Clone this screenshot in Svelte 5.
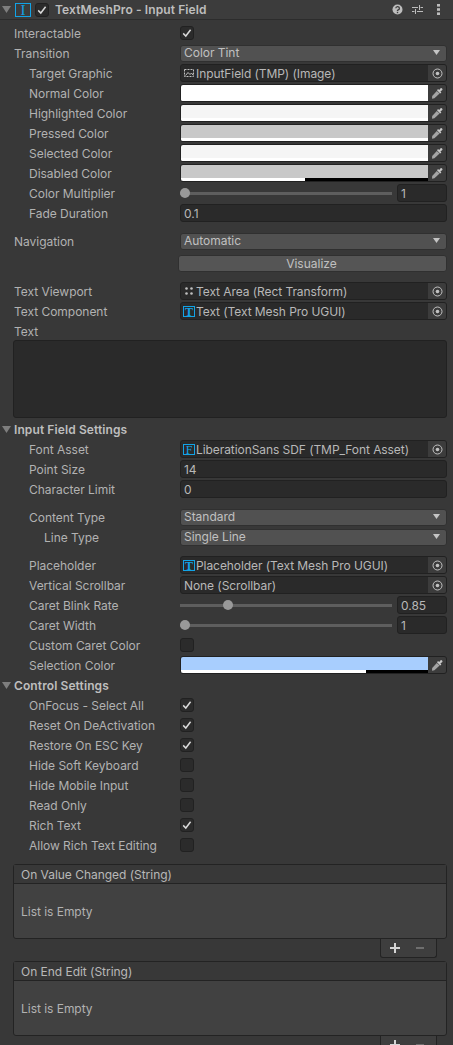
<script lang="ts">
	const eventLists = ['On Value Changed (String)', 'On End Edit (String)'];
	const controlRows = [
		{ label: 'OnFocus - Select All', on: true },
		{ label: 'Reset On DeActivation', on: true },
		{ label: 'Restore On ESC Key', on: true },
		{ label: 'Hide Soft Keyboard', on: false },
		{ label: 'Hide Mobile Input', on: false },
		{ label: 'Read Only', on: false },
		{ label: 'Rich Text', on: true },
		{ label: 'Allow Rich Text Editing', on: false }
	];
	const tintRows = [
		{ label: 'Normal Color', color: '#ffffff', alpha: 100 },
		{ label: 'Highlighted Color', color: '#f5f5f5', alpha: 100 },
		{ label: 'Pressed Color', color: '#c8c8c8', alpha: 100 },
		{ label: 'Selected Color', color: '#f5f5f5', alpha: 100 },
		{ label: 'Disabled Color', color: '#c8c8c8', alpha: 50 }
	];
</script>

{#snippet check(on: boolean)}
	<span class="checkbox">
		{#if on}
			<svg width="10" height="10" viewBox="0 0 10 10" fill="none" stroke="#d8d8d8" stroke-width="1.5">
				<path d="M1.2 5.4 L3.8 8 L8.6 1.8" />
			</svg>
		{/if}
	</span>
{/snippet}

{#snippet arrow()}
	<svg class="arrow" width="9" height="7" viewBox="0 0 9 7"><path d="M0 0 H9 L4.5 7 Z" fill="#7e7e7e" /></svg>
{/snippet}

{#snippet dropdown(text: string)}
	<div class="dropdown">
		<span>{text}</span>
		<svg width="7" height="5" viewBox="0 0 7 5"><path d="M0 0 H7 L3.5 5 Z" fill="#c4c4c4" /></svg>
	</div>
{/snippet}

{#snippet objectField(text: string, icon: string)}
	<div class="field object">
		{#if icon === 'image'}
			<svg class="ref-icon" width="12" height="12" viewBox="0 0 12 12" fill="none" stroke="#c0c0c0">
				<path d="M1.5 2.5 H10.5 V9.5 H1.5 Z" stroke-dasharray="2 1" />
				<path d="M2.5 8.5 L5 5.5 L7 7.5 L8.5 6 L10 8" />
			</svg>
		{:else if icon === 'rect'}
			<svg class="ref-icon" width="12" height="12" viewBox="0 0 12 12" fill="#c0c0c0">
				<circle cx="3.5" cy="3.5" r="1.3" />
				<circle cx="8.5" cy="3.5" r="1.3" />
				<circle cx="3.5" cy="8.5" r="1.3" />
				<circle cx="8.5" cy="8.5" r="1.3" />
			</svg>
		{:else if icon === 'text'}
			<span class="tmp-icon">T</span>
		{:else if icon === 'font'}
			<span class="tmp-icon thin">F</span>
		{/if}
		<span class="object-name">{text}</span>
		<span class="picker">
			<svg width="11" height="11" viewBox="0 0 11 11" fill="none" stroke="#c2c2c2">
				<circle cx="5.5" cy="5.5" r="4.5" />
				<circle cx="5.5" cy="5.5" r="1.8" fill="#c2c2c2" stroke="none" />
			</svg>
		</span>
	</div>
{/snippet}

{#snippet colorField(color: string, alpha: number)}
	<div class="field color">
		<div class="swatch" style="background: {color}">
			<div class="alpha-bar"><div class="alpha-fill" style="width: {alpha}%"></div></div>
		</div>
		<span class="dropper">
			<svg width="12" height="12" viewBox="0 0 12 12">
				<path d="M7 2 L8.2 3 L9.6 1.2 A1.4 1.4 0 0 1 11.4 3 L9.4 4.4 L10.4 5.6 L9.2 6.4 L6 3.2 Z" fill="#c8c8c8" />
				<path d="M5.8 3.9 L8.6 6.6 L3.4 11.2 L1 11.8 L1.2 9 Z" fill="#a4a4a4" />
			</svg>
		</span>
	</div>
{/snippet}

{#snippet slider(left: number, value: string)}
	<div class="slider">
		<div class="track"><span class="thumb" style="left: {left}px"></span></div>
		<div class="field slider-value">{value}</div>
	</div>
{/snippet}

<div class="inspector">
	<header class="component-header">
		{@render arrow()}
		<span class="script-icon">I</span>
		<span class="checkbox head-check">
			<svg width="10" height="10" viewBox="0 0 10 10" fill="none" stroke="#d8d8d8" stroke-width="1.5">
				<path d="M1.2 5.4 L3.8 8 L8.6 1.8" />
			</svg>
		</span>
		<span class="title">TextMeshPro - Input Field</span>
		<div class="head-tools">
			<svg class="help" width="11" height="11" viewBox="0 0 11 11">
				<circle cx="5.5" cy="5.5" r="5" fill="#bdbdbd" />
				<path d="M3.8 4.3 A1.8 1.7 0 1 1 6 6 L5.5 6.4 V7" fill="none" stroke="#3c3c3c" stroke-width="1.3" />
				<rect x="4.8" y="7.8" width="1.4" height="1.4" fill="#3c3c3c" />
			</svg>
			<svg class="presets" width="11" height="11" viewBox="0 0 11 11" fill="none" stroke="#bdbdbd">
				<path d="M0 3.5 H6 M8.5 3.5 H11 M7.5 1 V6 M0 7.5 H2.5 M5 7.5 H11 M3.5 5 V10" />
			</svg>
			<svg width="3" height="11" viewBox="0 0 3 11" fill="#bdbdbd">
				<rect x="0" y="0" width="3" height="2.6" />
				<rect x="0" y="4.2" width="3" height="2.6" />
				<rect x="0" y="8.4" width="3" height="2.6" />
			</svg>
		</div>
	</header>

	<div class="body">
		<div class="row"><span class="label">Interactable</span>{@render check(true)}</div>
		<div class="row"><span class="label">Transition</span>{@render dropdown('Color Tint')}</div>
		<div class="row sub"><span class="label">Target Graphic</span>{@render objectField('InputField (TMP) (Image)', 'image')}</div>
		{#each tintRows as tint}
			<div class="row sub"><span class="label">{tint.label}</span>{@render colorField(tint.color, tint.alpha)}</div>
		{/each}
		<div class="row sub"><span class="label">Color Multiplier</span>{@render slider(0, '1')}</div>
		<div class="row sub"><span class="label">Fade Duration</span><div class="field">0.1</div></div>

		<div class="row gap"><span class="label">Navigation</span>{@render dropdown('Automatic')}</div>
		<div class="row visualize"><button class="vis-button">Visualize</button></div>

		<div class="row gap"><span class="label">Text Viewport</span>{@render objectField('Text Area (Rect Transform)', 'rect')}</div>
		<div class="row"><span class="label">Text Component</span>{@render objectField('Text (Text Mesh Pro UGUI)', 'text')}</div>
		<div class="text-block">
			<div class="row"><span class="label">Text</span></div>
			<div class="text-area"></div>
		</div>

		<div class="row section">{@render arrow()}<span>Input Field Settings</span></div>
		<div class="row sub"><span class="label">Font Asset</span>{@render objectField('LiberationSans SDF (TMP_Font Asset)', 'font')}</div>
		<div class="row sub"><span class="label">Point Size</span><div class="field">14</div></div>
		<div class="row sub"><span class="label">Character Limit</span><div class="field">0</div></div>

		<div class="row sub gap"><span class="label">Content Type</span>{@render dropdown('Standard')}</div>
		<div class="row sub2"><span class="label">Line Type</span>{@render dropdown('Single Line')}</div>

		<div class="row sub gap"><span class="label">Placeholder</span>{@render objectField('Placeholder (Text Mesh Pro UGUI)', 'text')}</div>
		<div class="row sub"><span class="label">Vertical Scrollbar</span>{@render objectField('None (Scrollbar)', 'none')}</div>
		<div class="row sub"><span class="label">Caret Blink Rate</span>{@render slider(43, '0.85')}</div>
		<div class="row sub"><span class="label">Caret Width</span>{@render slider(0, '1')}</div>
		<div class="row sub"><span class="label">Custom Caret Color</span>{@render check(false)}</div>
		<div class="row sub"><span class="label">Selection Color</span>{@render colorField('#a8cefe', 75)}</div>

		<div class="row section">{@render arrow()}<span>Control Settings</span></div>
		{#each controlRows as item}
			<div class="row sub"><span class="label">{item.label}</span>{@render check(item.on)}</div>
		{/each}

		<div class="events">
			{#each eventLists as name}
				<div class="event">
					<div class="event-head">{name}</div>
					<div class="event-body">List is Empty</div>
					<div class="event-foot">
						<svg width="10" height="10" viewBox="0 0 10 10" fill="#d4d4d4"><path d="M4 0 H6 V4 H10 V6 H6 V10 H4 V6 H0 V4 H4 Z" /></svg>
						<svg width="8" height="10" viewBox="0 0 8 10" fill="#6e6e6e"><rect x="0" y="4" width="8" height="2" /></svg>
					</div>
				</div>
			{/each}
		</div>
	</div>
</div>

<style>
	:global(body) {
		background: #383838;
	}

	.inspector {
		height: 1045px;
		overflow: hidden;
		background: #383838;
		color: #b2b2b2;
		font-family: Inter, 'Noto Sans', sans-serif;
		font-size: 12px;
		letter-spacing: -0.03px;
	}

	.component-header {
		display: flex;
		align-items: center;
		height: 19px;
		padding: 0 0 0 2px;
		background: #3c3c3c;
		border-bottom: 1px solid #2c2c2c;
	}

	.arrow {
		flex: none;
	}

	.script-icon {
		box-sizing: border-box;
		width: 16px;
		height: 14px;
		margin-left: 4px;
		border: 1px solid #12a3e6;
		color: #12a3e6;
		font-family: 'Liberation Serif', serif;
		font-size: 15px;
		line-height: 12px;
		text-align: center;
	}

	.title {
		margin-left: 6px;
		color: #bebebe;
		font-weight: 600;
		letter-spacing: 0.1px;
	}

	.head-check {
		margin-left: 4px;
	}

	.head-tools {
		display: flex;
		align-items: center;
		margin-left: auto;
		padding-right: 13px;
	}

	.help {
		margin-right: 9px;
	}

	.presets {
		margin-right: 14px;
	}

	.body {
		padding-top: 3px;
	}

	.row {
		display: flex;
		align-items: center;
		height: 20px;
		padding: 0 6px 0 14px;
	}

	.row.sub {
		padding-left: 29px;
	}

	.row.sub2 {
		padding-left: 44px;
	}

	.row.gap {
		margin-top: 8px;
	}

	.label {
		flex: none;
		width: 166px;
		white-space: nowrap;
	}

	.row.sub .label {
		width: 151px;
	}

	.row.sub2 .label {
		width: 136px;
	}

	.section {
		padding-left: 2px;
		color: #bebebe;
		font-weight: 600;
		letter-spacing: 0.1px;
		gap: 3px;
	}

	.checkbox {
		box-sizing: border-box;
		flex: none;
		display: flex;
		align-items: center;
		justify-content: center;
		width: 14px;
		height: 14px;
		background: #2b2b2b;
		border: 1px solid #212121;
		border-radius: 3px;
	}

	.dropdown {
		box-sizing: border-box;
		flex: 1;
		display: flex;
		align-items: center;
		justify-content: space-between;
		height: 17px;
		padding: 0 6px 1px 3px;
		background: #515151;
		border: 1px solid #303030;
		border-radius: 3px;
		color: #c0c0c0;
	}

	.field {
		box-sizing: border-box;
		flex: 1;
		display: flex;
		align-items: center;
		height: 18px;
		padding: 0 3px;
		background: #2a2a2a;
		border: 1px solid #212121;
		border-radius: 3px;
		color: #b8b8b8;
		white-space: nowrap;
		overflow: hidden;
	}

	.object {
		padding-right: 0;
	}

	.ref-icon {
		flex: none;
		margin: 0 1px 0 -1px;
	}

	.tmp-icon {
		box-sizing: border-box;
		flex: none;
		width: 12px;
		height: 11px;
		margin: 0 1px 0 -1px;
		border: 1px solid #12a3e6;
		color: #12a3e6;
		font-family: 'Liberation Serif', serif;
		font-size: 12px;
		font-weight: 700;
		line-height: 10px;
		letter-spacing: 0;
		text-align: center;
	}

	.tmp-icon.thin {
		font-weight: 400;
	}

	.object-name {
		flex: 1;
		overflow: hidden;
		letter-spacing: -0.07px;
	}

	.picker {
		flex: none;
		display: flex;
		align-items: center;
		justify-content: center;
		width: 18px;
		height: 100%;
		background: #3c3c3c;
	}

	.color {
		padding: 0;
	}

	.swatch {
		position: relative;
		flex: 1;
		height: 100%;
	}

	.alpha-bar {
		position: absolute;
		left: 0;
		right: 0;
		bottom: 0;
		height: 3px;
		background: #000;
	}

	.alpha-fill {
		height: 100%;
		background: #fff;
	}

	.dropper {
		flex: none;
		display: flex;
		align-items: center;
		justify-content: center;
		width: 18px;
		height: 100%;
		background: #3c3c3c;
	}

	.slider {
		flex: 1;
		display: flex;
		align-items: center;
		gap: 5px;
	}

	.track {
		position: relative;
		flex: 1;
		height: 3px;
		background: #5e5e5e;
	}

	.thumb {
		position: absolute;
		top: -4px;
		width: 10px;
		height: 10px;
		border-radius: 50%;
		background: #999;
	}

	.slider-value {
		flex: none;
		width: 50px;
	}

	.visualize {
		margin-top: 2px;
		padding-left: 178px;
	}

	.vis-button {
		flex: 1;
		height: 17px;
		padding: 0 2px 2px 0;
		background: #555;
		border: 1px solid #303030;
		border-radius: 3px;
		color: #c0c0c0;
		font: inherit;
	}

	.text-block {
		height: 98px;
	}

	.text-area {
		box-sizing: border-box;
		height: 78px;
		margin: -1px 6px 0 13px;
		background: #2a2a2a;
		border: 1px solid #212121;
		border-radius: 3px;
	}

	.events {
		display: flex;
		flex-direction: column;
		gap: 4px;
		margin-top: 9px;
		padding: 0 6px 0 13px;
	}

	.event {
		position: relative;
		margin-bottom: 18px;
		background: #414141;
		border: 1px solid #232323;
		border-radius: 3px;
	}

	.event-head {
		height: 18px;
		padding-left: 7px;
		background: #383838;
		border-bottom: 1px solid #232323;
		line-height: 20px;
		color: #b8b8b8;
	}

	.event-body {
		height: 54px;
		padding-left: 7px;
		line-height: 56px;
	}

	.event-foot {
		position: absolute;
		top: 74px;
		right: 9px;
		box-sizing: border-box;
		display: flex;
		align-items: center;
		justify-content: center;
		gap: 16px;
		width: 57px;
		height: 19px;
		padding-right: 3px;
		background: #3e3e3e;
		border: 1px solid #232323;
		border-top: none;
		border-radius: 0 0 3px 3px;
	}
</style>
